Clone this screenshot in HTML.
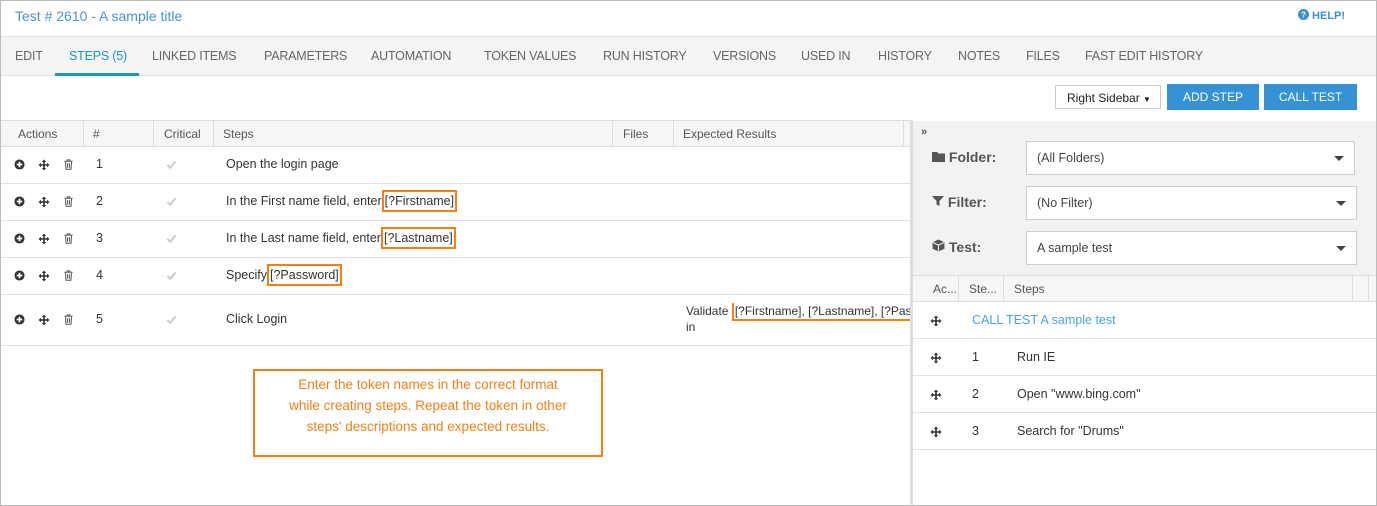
<!DOCTYPE html>
<html><head><style>
*{box-sizing:border-box;margin:0;padding:0}
body{width:1377px;height:506px;font-family:"Liberation Sans",sans-serif;font-size:12.5px;color:#333;background:#fff;position:relative;overflow:hidden}
.a{position:absolute}
.frame{left:0;top:0;width:1377px;height:506px;border:1px solid #bbb}
.title{left:15px;top:8px;font-size:14px;color:#4a90d9}
.help{left:1298px;top:9px;font-size:11px;color:#3a8fd6;font-weight:bold}
.tabs{left:1px;top:36px;width:1375px;height:40px;background:#f4f4f4;border-top:1px solid #e2e2e2;border-bottom:1px solid #e2e2e2}
.tab{position:absolute;top:12px;font-size:12.5px;color:#666;letter-spacing:-0.2px}
.tb{top:120px;left:1px;width:910px;height:27px;background:#f6f6f6;border-top:1px solid #ddd;border-bottom:1px solid #ddd}
.th{position:absolute;top:6px;color:#555;font-size:12px}
.vl{position:absolute;top:0;width:1px;height:26px;background:#ddd}
.row{left:1px;width:910px;border-bottom:1px solid #e2e2e2}
.ic{position:absolute}
.tx{position:absolute;font-size:12.5px;white-space:nowrap}
.tok{border:2px solid #f57f17;padding:2px 1px 2px 1px}
.btn{background:#3592d4;color:#fff;text-align:center;font-size:12px;line-height:26px;height:26px}
.sel{left:1026px;height:34px;background:#fff;border:1px solid #ccc;padding:9px 10px;color:#444;font-size:12.5px}
.car{position:absolute;right:10px;top:14px;border-left:5px solid transparent;border-right:5px solid transparent;border-top:5px solid #444}
.lab{font-size:14px;color:#555;font-weight:bold}
.rrow{left:913px;width:463px;border-bottom:1px solid #e2e2e2;height:37px}
</style></head><body>
<svg width="0" height="0" style="position:absolute"><defs>
<symbol id="plus" viewBox="0 0 12 12"><circle cx="6" cy="6" r="5.5" fill="#333"/><path d="M6 3v6M3 6h6" stroke="#fff" stroke-width="1.8"/></symbol>
<symbol id="move" viewBox="0 0 12 12"><path d="M6 0.5L8.2 3H6.8V5.2H9V3.8L11.5 6 9 8.2V6.8H6.8V9H8.2L6 11.5 3.8 9H5.2V6.8H3V8.2L0.5 6 3 3.8V5.2H5.2V3H3.8Z" fill="#333"/></symbol>
<symbol id="trash" viewBox="0 0 12 12"><path d="M1.5 2.5h9M4.5 2.5V1h3v1.5M2.7 3.2l.6 8h5.4l.6-8M5 4.5v5M7 4.5v5" stroke="#555" stroke-width="1.1" fill="none"/></symbol>
<symbol id="chk" viewBox="0 0 12 12"><path d="M1.5 6.5l3 3 6-7" stroke="#ccc" stroke-width="2.2" fill="none"/></symbol>
</defs></svg>
<div class="a frame"></div>
<div class="a title">Test # 2610 - A sample title</div>
<div class="a help"><svg width="11" height="11" viewBox="0 0 12 12" style="vertical-align:-1px"><circle cx="6" cy="6" r="6" fill="#3a8fd6"/><text x="6" y="9.5" font-size="9" font-weight="bold" fill="#fff" text-anchor="middle" font-family="Liberation Sans">?</text></svg> HELP!</div>
<div class="a tabs">
<span class="tab" style="left:14px">EDIT</span>
<span class="tab" style="left:68px;color:#1a9bb0">STEPS (5)</span>
<div style="position:absolute;left:54px;top:36px;width:84px;height:3px;background:#1a9bb0"></div>
<span class="tab" style="left:151px">LINKED ITEMS</span>
<span class="tab" style="left:263px">PARAMETERS</span>
<span class="tab" style="left:370px">AUTOMATION</span>
<span class="tab" style="left:483px">TOKEN VALUES</span>
<span class="tab" style="left:602px">RUN HISTORY</span>
<span class="tab" style="left:712px">VERSIONS</span>
<span class="tab" style="left:800px">USED IN</span>
<span class="tab" style="left:877px">HISTORY</span>
<span class="tab" style="left:957px">NOTES</span>
<span class="tab" style="left:1025px">FILES</span>
<span class="tab" style="left:1084px">FAST EDIT HISTORY</span>
</div>
<div class="a" style="left:1055px;top:85px;width:106px;height:24px;border:1px solid #ccc;font-size:12px;padding:5px 0 0 11px;color:#222">Right Sidebar <span style="font-size:8px">&#9660;</span></div>
<div class="a btn" style="left:1167px;top:84px;width:92px">ADD STEP</div>
<div class="a btn" style="left:1264px;top:84px;width:93px">CALL TEST</div>

<div class="a tb">
<span class="th" style="left:17px">Actions</span><div class="vl" style="left:82px"></div>
<span class="th" style="left:92px">#</span><div class="vl" style="left:152px"></div>
<span class="th" style="left:163px">Critical</span><div class="vl" style="left:212px"></div>
<span class="th" style="left:222px">Steps</span><div class="vl" style="left:611px"></div>
<span class="th" style="left:622px">Files</span><div class="vl" style="left:672px"></div>
<span class="th" style="left:682px">Expected Results</span><div class="vl" style="left:902px"></div>
</div>

<div class="a row" style="top:147px;height:37px"></div>
<div class="a row" style="top:184px;height:37px"></div>
<div class="a row" style="top:221px;height:37px"></div>
<div class="a row" style="top:258px;height:37px"></div>
<div class="a row" style="top:295px;height:51px"></div>

<div class="a" style="left:0;top:159px;width:910px">
<svg class="ic" style="left:14px" width="11" height="11"><use href="#plus"/></svg><svg class="ic" style="left:38px" width="12" height="12"><use href="#move"/></svg><svg class="ic" style="left:63px" width="11" height="11"><use href="#trash"/></svg>
<span class="tx" style="left:96px;top:-2px">1</span><svg class="ic" style="left:166px" width="11" height="11"><use href="#chk"/></svg><span class="tx" style="left:226px;top:-2px">Open the login page</span></div>
<div class="a" style="left:0;top:196px;width:910px">
<svg class="ic" style="left:14px" width="11" height="11"><use href="#plus"/></svg><svg class="ic" style="left:38px" width="12" height="12"><use href="#move"/></svg><svg class="ic" style="left:63px" width="11" height="11"><use href="#trash"/></svg>
<span class="tx" style="left:96px;top:-2px">2</span><svg class="ic" style="left:166px" width="11" height="11"><use href="#chk"/></svg><span class="tx" style="left:226px;top:-2px">In the First name field, enter<span class="tok">[?Firstname]</span></span></div>
<div class="a" style="left:0;top:233px;width:910px">
<svg class="ic" style="left:14px" width="11" height="11"><use href="#plus"/></svg><svg class="ic" style="left:38px" width="12" height="12"><use href="#move"/></svg><svg class="ic" style="left:63px" width="11" height="11"><use href="#trash"/></svg>
<span class="tx" style="left:96px;top:-2px">3</span><svg class="ic" style="left:166px" width="11" height="11"><use href="#chk"/></svg><span class="tx" style="left:226px;top:-2px">In the Last name field, enter<span class="tok">[?Lastname]</span></span></div>
<div class="a" style="left:0;top:270px;width:910px">
<svg class="ic" style="left:14px" width="11" height="11"><use href="#plus"/></svg><svg class="ic" style="left:38px" width="12" height="12"><use href="#move"/></svg><svg class="ic" style="left:63px" width="11" height="11"><use href="#trash"/></svg>
<span class="tx" style="left:96px;top:-2px">4</span><svg class="ic" style="left:166px" width="11" height="11"><use href="#chk"/></svg><span class="tx" style="left:226px;top:-2px">Specify<span class="tok">[?Password]</span></span></div>
<div class="a" style="left:0;top:314px;width:910px">
<svg class="ic" style="left:14px" width="11" height="11"><use href="#plus"/></svg><svg class="ic" style="left:38px" width="12" height="12"><use href="#move"/></svg><svg class="ic" style="left:63px" width="11" height="11"><use href="#trash"/></svg>
<span class="tx" style="left:96px;top:-2px">5</span><svg class="ic" style="left:166px" width="11" height="11"><use href="#chk"/></svg><span class="tx" style="left:226px;top:-2px">Click Login</span></div>
<div class="a" style="left:686px;top:303px;width:227px;height:34px;overflow:hidden;font-size:12px;line-height:16px;white-space:nowrap">Validate <span class="tok" style="padding:1px 1px">[?Firstname], [?Lastname], [?Password]</span><br>in</div>

<div class="a" style="left:253px;top:369px;width:350px;height:88px;border:2px solid #f57f17;color:#f57f17;font-size:13.5px;line-height:21px;text-align:center;padding-top:3px">Enter the token names in the correct format<br>while creating steps. Repeat the token in other<br>steps' descriptions and expected results.</div>

<div class="a" style="left:910px;top:120px;width:3px;height:386px;background:#ddd"></div>
<div class="a" style="left:913px;top:121px;width:463px;height:155px;background:#f2f2f2;border-bottom:1px solid #ddd"></div>
<div class="a" style="left:921px;top:126px;font-size:11px;color:#555;font-weight:bold">&raquo;</div>
<div class="a lab" style="left:932px;top:149px"><svg width="13" height="11" viewBox="0 0 13 11"><path d="M0 1h5l1.5 1.5H13V11H0Z" fill="#555"/></svg> Folder:</div>
<div class="a lab" style="left:932px;top:194px"><svg width="12" height="12" viewBox="0 0 12 12"><path d="M0 1h12L7.5 6v5L4.5 9.5V6Z" fill="#555"/></svg> Filter:</div>
<div class="a lab" style="left:932px;top:239px"><svg width="13" height="13" viewBox="0 0 12 12"><path d="M6 0.5L11.5 3v6L6 11.5 0.5 9V3Z" fill="#555"/><path d="M0.8 3.2L6 5.6l5.2-2.4M6 5.6v5.8" stroke="#f2f2f2" stroke-width="1" fill="none"/></svg> Test:</div>
<div class="a sel" style="top:141px;width:329px">(All Folders)<span class="car"></span></div>
<div class="a sel" style="top:186px;width:331px">(No Filter)<span class="car"></span></div>
<div class="a sel" style="top:231px;width:331px">A sample test<span class="car"></span></div>
<div class="a" style="left:913px;top:276px;width:463px;height:26px;background:#f6f6f6;border-bottom:1px solid #ddd">
<span class="th" style="left:20px">Ac...</span><div class="vl" style="left:45px;height:25px"></div>
<span class="th" style="left:56px">Ste...</span><div class="vl" style="left:90px;height:25px"></div>
<span class="th" style="left:101px">Steps</span><div class="vl" style="left:439px;height:25px"></div><div class="vl" style="left:455px;height:25px"></div>
</div>
<div class="a rrow" style="top:302px"><svg class="ic" style="left:17px;top:13px" width="12" height="12"><use href="#move"/></svg><span class="tx" style="left:59px;top:11px;color:#4aa3df">CALL TEST A sample test</span></div>
<div class="a rrow" style="top:339px"><svg class="ic" style="left:17px;top:13px" width="12" height="12"><use href="#move"/></svg><span class="tx" style="left:59px;top:11px">1</span><span class="tx" style="left:104px;top:11px">Run IE</span></div>
<div class="a rrow" style="top:376px"><svg class="ic" style="left:17px;top:13px" width="12" height="12"><use href="#move"/></svg><span class="tx" style="left:59px;top:11px">2</span><span class="tx" style="left:104px;top:11px">Open "www.bing.com"</span></div>
<div class="a rrow" style="top:413px"><svg class="ic" style="left:17px;top:13px" width="12" height="12"><use href="#move"/></svg><span class="tx" style="left:59px;top:11px">3</span><span class="tx" style="left:104px;top:11px">Search for "Drums"</span></div>
</body></html>
